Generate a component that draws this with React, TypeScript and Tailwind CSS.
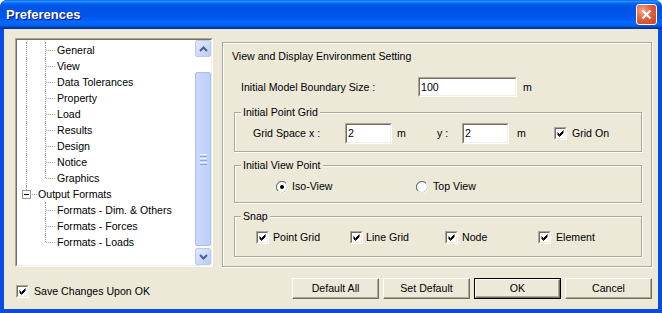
import React from 'react';

type TreeRow = {
    label: string;
    kind: 'child' | 'parent';
    rootLine?: boolean;
    last?: boolean;
};

const treeRows: TreeRow[] = [
    { label: 'General', kind: 'child', rootLine: true },
    { label: 'View', kind: 'child', rootLine: true },
    { label: 'Data Tolerances', kind: 'child', rootLine: true },
    { label: 'Property', kind: 'child', rootLine: true },
    { label: 'Load', kind: 'child', rootLine: true },
    { label: 'Results', kind: 'child', rootLine: true },
    { label: 'Design', kind: 'child', rootLine: true },
    { label: 'Notice', kind: 'child', rootLine: true },
    { label: 'Graphics', kind: 'child', rootLine: true, last: true },
    { label: 'Output Formats', kind: 'parent' },
    { label: 'Formats - Dim. & Others', kind: 'child' },
    { label: 'Formats - Forces', kind: 'child' },
    { label: 'Formats - Loads', kind: 'child', last: true },
];

function Sunken({ className, children }: { className?: string; children?: React.ReactNode }) {
    return (
        <div className={'border border-t-[#ACA899] border-l-[#ACA899] border-r-white border-b-white ' + (className ?? '')}>
            <div className="h-full w-full border border-t-[#716F64] border-l-[#716F64] border-r-[#F1EFE2] border-b-[#F1EFE2] bg-white">
                {children}
            </div>
        </div>
    );
}

function CheckBox() {
    return (
        <Sunken className="h-[13px] w-[13px] shrink-0">
            <svg width="9" height="9" viewBox="0 0 9 9" className="block">
                <path d="M1.5 3.5 L3.5 5.5 L7.5 1.5 M1.5 4.5 L3.5 6.5 L7.5 2.5 M1.5 5.5 L3.5 7.5 L7.5 3.5" stroke="#000" strokeWidth="1" fill="none" />
            </svg>
        </Sunken>
    );
}

function Radio({ on }: { on?: boolean }) {
    return (
        <svg width="12" height="12" viewBox="0 0 12 12" className="shrink-0">
            <circle cx="6" cy="6" r="5.5" fill="#fff" stroke="#ACA899" />
            <path d="M2 10 A5.5 5.5 0 0 1 10 2" stroke="#716F64" fill="none" />
            <path d="M10.3 2.3 A5.5 5.5 0 0 1 2.3 10.3" stroke="#fff" fill="none" />
            {on && <circle cx="6" cy="6" r="2" fill="#000" />}
        </svg>
    );
}

function TextBox({ value, className }: { value: string; className: string }) {
    return (
        <Sunken className={className}>
            <div className="flex h-full items-center pl-[1px] leading-[13px]">{value}</div>
        </Sunken>
    );
}

function Group({ title, className, children }: { title: string; className: string; children: React.ReactNode }) {
    return (
        <div className={'border border-[#ACA899] shadow-[1px_1px_0_#fff,inset_1px_1px_0_#fff] ' + className}>
            <div className="-mt-[7px] ml-[6px] w-fit bg-[#ECE9D8] px-[2px] leading-[13px]">{title}</div>
            {children}
        </div>
    );
}

function Button({ label, primary }: { label: string; primary?: boolean }) {
    return (
        <div className={'h-[21px] w-[87px] ' + (primary ? 'border border-black' : '')}>
            <div className="flex h-full w-full items-center justify-center border border-t-white border-l-white border-r-[#716F64] border-b-[#716F64] shadow-[inset_-1px_-1px_0_#ACA899] leading-[13px]">
                {label}
            </div>
        </div>
    );
}

function Chevron({ up }: { up?: boolean }) {
    return (
        <svg width="9" height="6" viewBox="0 0 9 6">
            <path d={up ? 'M1 5 L4.5 1.5 L8 5' : 'M1 1 L4.5 4.5 L8 1'} stroke="#4D6185" strokeWidth="2" fill="none" />
        </svg>
    );
}

function TreeLine({ row }: { row: TreeRow }) {
    if (row.kind === 'parent') {
        return (
            <div className="flex h-4 items-center">
                <span className="relative h-full w-[20px] shrink-0">
                    <span className="absolute left-[9px] top-0 h-[4px] border-l border-dotted border-[#A0A0A0]" />
                    <span className="absolute left-[5px] top-[4px] flex h-[9px] w-[9px] items-center justify-center border border-[#919B9C] bg-white">
                        <span className="h-px w-[5px] bg-black" />
                    </span>
                    <span className="absolute left-[15px] top-[8px] w-[5px] border-t border-dotted border-[#A0A0A0]" />
                </span>
                <span className="pl-[1px] leading-[13px]">{row.label}</span>
            </div>
        );
    }
    return (
        <div className="flex h-4 items-center">
            <span className="relative h-full w-[28px] shrink-0">
                {row.rootLine && <span className="absolute left-[9px] top-0 h-full border-l border-dotted border-[#A0A0A0]" />}
            </span>
            <span className="relative h-full w-[12px] shrink-0">
                <span className={'absolute left-0 top-0 border-l border-dotted border-[#A0A0A0] ' + (row.last ? 'h-[8px]' : 'h-full')} />
                <span className="absolute left-[1px] top-[8px] w-[9px] border-t border-dotted border-[#A0A0A0]" />
            </span>
            <span className="leading-[13px]">{row.label}</span>
        </div>
    );
}

export default function App() {
    return (
        <div className="flex h-[313px] w-[662px] flex-col overflow-hidden rounded-t-[7px] bg-[#0A4BE0] font-['Liberation_Sans',Arial,sans-serif] text-[10.6px] text-black">
            <div className="flex h-[29px] shrink-0 items-center justify-between bg-[linear-gradient(to_bottom,#0058EE_0%,#3593FF_4%,#288EFF_6%,#127DFF_8%,#036FFC_10%,#0262EE_14%,#0057E5_20%,#0054E3_24%,#0055EB_56%,#005BF5_66%,#026AFE_76%,#0062EF_86%,#0052D6_92%,#0040AB_94%,#003092_100%)] pl-[6px] pr-[5px]">
                <span className="text-[13px] font-bold text-white [text-shadow:1px_1px_#0F1089]">Preferences</span>
                <div className="flex h-[21px] w-[21px] items-center justify-center rounded-[3px] border border-white bg-[radial-gradient(circle_at_30%_30%,#F3A98E,#E0603A_45%,#CC451D)]">
                    <svg width="11" height="11" viewBox="0 0 11 11">
                        <path d="M1.5 1.5 L9.5 9.5 M9.5 1.5 L1.5 9.5" stroke="#fff" strokeWidth="2.2" />
                    </svg>
                </div>
            </div>

            <div className="flex min-h-0 flex-1 border-x-4 border-b-4 border-[#0A4BE0] bg-[#ECE9D8] pl-[11px]">
                <div className="flex w-[198px] flex-col pt-[9px]">
                    <div className="h-[229px] border border-t-[#ACA899] border-l-[#ACA899] border-r-white border-b-white">
                        <div className="flex h-full border border-t-[#716F64] border-l-[#716F64] border-r-[#F1EFE2] border-b-[#F1EFE2] bg-white">
                            <div className="min-w-0 flex-1 overflow-hidden pt-[2px]">
                                {treeRows.map((row) => (
                                    <TreeLine key={row.label} row={row} />
                                ))}
                            </div>
                            <div className="flex w-[16px] flex-col bg-white">
                                <div className="flex h-[17px] items-center justify-center rounded-[2px] border border-[#B7CAF5] bg-[linear-gradient(135deg,#E2EAFE,#B9CCF9)]">
                                    <Chevron up />
                                </div>
                                <div className="h-[15px]" />
                                <div className="flex h-[174px] flex-col items-center justify-center gap-[1px] rounded-[2px] border border-[#A9BEF2] bg-[linear-gradient(to_right,#CAD8FD,#BDD0FB)]">
                                    <span className="h-px w-[7px] bg-[#EEF4FE]" />
                                    <span className="h-px w-[7px] bg-[#8CA6E8]" />
                                    <span className="h-px w-[7px] bg-[#EEF4FE]" />
                                    <span className="h-px w-[7px] bg-[#8CA6E8]" />
                                    <span className="h-px w-[7px] bg-[#EEF4FE]" />
                                    <span className="h-px w-[7px] bg-[#8CA6E8]" />
                                </div>
                                <div className="flex-1" />
                                <div className="flex h-[17px] items-center justify-center rounded-[2px] border border-[#B7CAF5] bg-[linear-gradient(135deg,#E2EAFE,#B9CCF9)]">
                                    <Chevron />
                                </div>
                            </div>
                        </div>
                    </div>
                    <div className="mt-[18px] flex items-center gap-[5px] pl-[1px]">
                        <CheckBox />
                        <span className="leading-[13px]">Save Changes Upon OK</span>
                    </div>
                </div>

                <div className="ml-[9px] flex w-[430px] flex-col pt-[13px]">
                    <div className="h-[225px] border border-[#ACA899] shadow-[1px_1px_0_#fff,inset_1px_1px_0_#fff]">
                        <div className="mt-[7px] pl-[9px] leading-[13px]">View and Display Environment Setting</div>
                        <div className="mt-[14px] flex h-[20px] items-center pl-[18px]">
                            <span className="w-[177px] leading-[13px]">Initial Model Boundary Size :</span>
                            <TextBox value="100" className="h-[20px] w-[99px]" />
                            <span className="ml-[6px] leading-[13px]">m</span>
                        </div>

                        <Group title="Initial Point Grid" className="ml-[11px] mt-[15px] h-[40px] w-[408px]">
                            <div className="mt-[4px] flex h-[21px] items-center pl-[18px]">
                                <span className="w-[92px]">Grid Space x :</span>
                                <TextBox value="2" className="h-[21px] w-[47px]" />
                                <span className="w-[45px] pl-[5px]">m</span>
                                <span className="w-[25px]">y :</span>
                                <TextBox value="2" className="h-[21px] w-[47px]" />
                                <span className="w-[45px] pl-[8px]">m</span>
                                <CheckBox />
                                <span className="ml-[5px]">Grid On</span>
                            </div>
                        </Group>

                        <Group title="Initial View Point" className="ml-[11px] mt-[13px] h-[38px] w-[408px]">
                            <div className="mt-[7px] flex h-4 items-center pl-[41px]">
                                <div className="flex w-[140px] items-center gap-[4px]">
                                    <Radio on />
                                    <span>Iso-View</span>
                                </div>
                                <div className="flex items-center gap-[5px]">
                                    <Radio />
                                    <span>Top View</span>
                                </div>
                            </div>
                        </Group>

                        <Group title="Snap" className="ml-[11px] mt-[13px] h-[41px] w-[408px]">
                            <div className="mt-[7px] flex h-4 items-center pl-[21px]">
                                <div className="flex w-[94px] items-center gap-[4px]">
                                    <CheckBox />
                                    <span>Point Grid</span>
                                </div>
                                <div className="flex w-[95px] items-center gap-[3px]">
                                    <CheckBox />
                                    <span>Line Grid</span>
                                </div>
                                <div className="flex w-[93px] items-center gap-[4px]">
                                    <CheckBox />
                                    <span>Node</span>
                                </div>
                                <div className="flex items-center gap-[5px]">
                                    <CheckBox />
                                    <span>Element</span>
                                </div>
                            </div>
                        </Group>
                    </div>

                    <div className="mt-[11px] flex justify-end gap-[4px]">
                        <Button label="Default All" />
                        <Button label="Set Default" />
                        <Button label="OK" primary />
                        <Button label="Cancel" />
                    </div>
                </div>
            </div>
        </div>
    );
}
